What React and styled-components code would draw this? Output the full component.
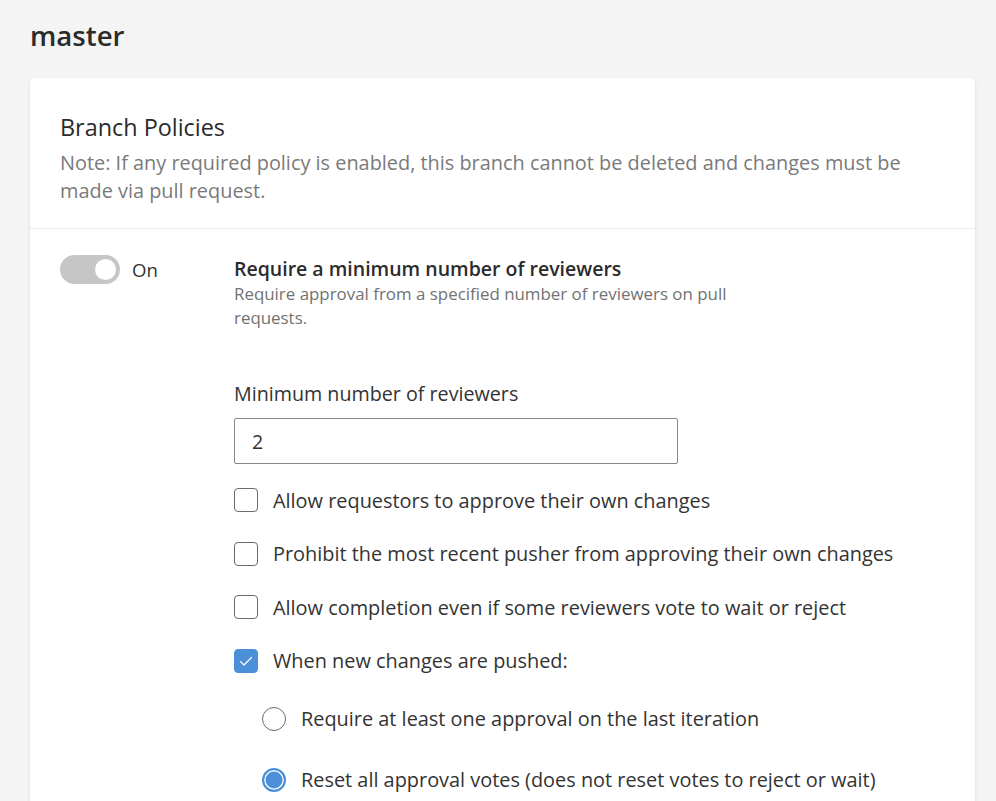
import React from "react";
import styled, {createGlobalStyle} from "styled-components";

const GlobalStyle = createGlobalStyle`
  body {
    margin: 0;
    background: #f4f4f4;
    font-family: "Open Sans", "Noto Sans", sans-serif;
    color: #323130;
  }
`;

const checks = [
    {label: "Allow requestors to approve their own changes", checked: false},
    {label: "Prohibit the most recent pusher from approving their own changes", checked: false},
    {label: "Allow completion even if some reviewers vote to wait or reject", checked: false},
    {label: "When new changes are pushed:", checked: true},
];

const radios = [
    {label: "Require at least one approval on the last iteration", checked: false},
    {label: "Reset all approval votes (does not reset votes to reject or wait)", checked: true},
];

const CheckIcon = () => (
    <svg width="16" height="16" viewBox="0 0 16 16" fill="none">
        <path d="M2.5 8.6 L6 12 L13.5 4.5" stroke="#fff" strokeWidth="1.3" strokeLinecap="round"
              strokeLinejoin="round"/>
    </svg>
);

const App = () => {
    return (
        <>
            <GlobalStyle/>
            <Page>
                <Title>master</Title>
                <Card>
                    <Header>
                        <h2>Branch Policies</h2>
                        <p>
                            Note: If any required policy is enabled, this branch cannot be deleted and changes must be
                            made via pull request.
                        </p>
                    </Header>

                    <Policy>
                        <ToggleWrap>
                            <Toggle on/>
                            <span>On</span>
                        </ToggleWrap>

                        <Settings>
                            <PolicyTitle>Require a minimum number of reviewers</PolicyTitle>
                            <PolicyDesc>
                                Require approval from a specified number of reviewers on pull requests.
                            </PolicyDesc>

                            <FieldLabel>Minimum number of reviewers</FieldLabel>
                            <TextBox>2</TextBox>

                            <OptionList>
                                {checks.map((c) => (
                                    <Option key={c.label}>
                                        <CheckBox checked={c.checked}>{c.checked && <CheckIcon/>}</CheckBox>
                                        {c.label}
                                    </Option>
                                ))}
                            </OptionList>

                            <RadioList>
                                {radios.map((r) => (
                                    <Option key={r.label}>
                                        <Radio checked={r.checked}/>
                                        {r.label}
                                    </Option>
                                ))}
                            </RadioList>
                        </Settings>
                    </Policy>
                </Card>
            </Page>
        </>
    );
};

const Page = styled.div`
  padding: 15px 21px 0 30px;
  height: 801px;
  box-sizing: border-box;
  overflow: hidden;
`;

const Title = styled.h1`
  margin: 0;
  font-size: 27.6px;
  font-weight: 600;
  line-height: 40px;
  color: #2b2b2b;
`;

const Card = styled.div`
  margin-top: 23px;
  background: #fff;
  border-radius: 5px;
  box-shadow: 0 1px 3px rgba(0, 0, 0, 0.12);
  min-height: 800px;
`;

const Header = styled.div`
  padding: 34px 30px 23px;
  border-bottom: 1px solid #eaeaea;

  h2 {
    margin: 0;
    font-size: 23.4px;
    font-weight: 400;
    line-height: 30px;
    color: #2b2b2b;
  }

  p {
    margin: 7px 0 0;
    font-size: 19.9px;
    line-height: 28px;
    color: #7a7a7a;
  }
`;

const Policy = styled.div`
  display: flex;
  padding: 25px 30px;
`;

const ToggleWrap = styled.div`
  display: flex;
  align-items: center;
  gap: 12px;
  width: 174px;
  height: 30px;
  font-size: 18.6px;
  color: #333;
  flex-shrink: 0;
`;

const Toggle = styled.div`
  position: relative;
  width: 60px;
  height: 29px;
  border-radius: 15px;
  background: #c6c6c6;

  &::after {
    content: "";
    position: absolute;
    top: 4px;
    left: ${(p) => (p.on ? "35px" : "5px")};
    width: 21px;
    height: 21px;
    border-radius: 50%;
    background: #fff;
  }
`;

const Settings = styled.div`
  display: flex;
  flex-direction: column;
  padding-top: 2px;
`;

const PolicyTitle = styled.div`
  font-size: 19.5px;
  font-weight: 600;
  line-height: 26px;
  color: #2b2b2b;
`;

const PolicyDesc = styled.div`
  max-width: 520px;
  font-size: 16.9px;
  line-height: 24px;
  color: #727272;
`;

const FieldLabel = styled.div`
  margin-top: 51px;
  font-size: 19.7px;
  line-height: 26px;
  color: #333;
`;

const TextBox = styled.div`
  margin-top: 11px;
  width: 444px;
  height: 46px;
  box-sizing: border-box;
  border: 1px solid #8a8886;
  border-radius: 2px;
  padding: 0 17px;
  display: flex;
  align-items: center;
  font-size: 19.7px;
  color: #333;
`;

const OptionList = styled.div`
  display: flex;
  flex-direction: column;
  gap: 23.5px;
  margin-top: 21px;
`;

const RadioList = styled.div`
  display: flex;
  flex-direction: column;
  gap: 31px;
  margin-top: 28px;
  padding-left: 28px;
`;

const Option = styled.div`
  display: flex;
  align-items: center;
  gap: 15px;
  height: 30px;
  font-size: 19.9px;
  color: #333;
  white-space: nowrap;
`;

const CheckBox = styled.span`
  display: flex;
  align-items: center;
  justify-content: center;
  width: 24px;
  height: 24px;
  box-sizing: border-box;
  border-radius: 4px;
  border: 1px solid ${(p) => (p.checked ? "#4a8fd8" : "#6d6a68")};
  background: ${(p) => (p.checked ? "#4a8fd8" : "#fff")};
  flex-shrink: 0;
`;

const Radio = styled.span`
  width: 24px;
  height: 24px;
  box-sizing: border-box;
  border-radius: 50%;
  flex-shrink: 0;
  border: ${(p) => (p.checked ? "2px solid #4a8fd8" : "1px solid #6d6a68")};
  background: ${(p) => (p.checked ? "#4a8fd8" : "#fff")};
  box-shadow: ${(p) => (p.checked ? "inset 0 0 0 1.5px #fff" : "none")};
`;

export default App;
